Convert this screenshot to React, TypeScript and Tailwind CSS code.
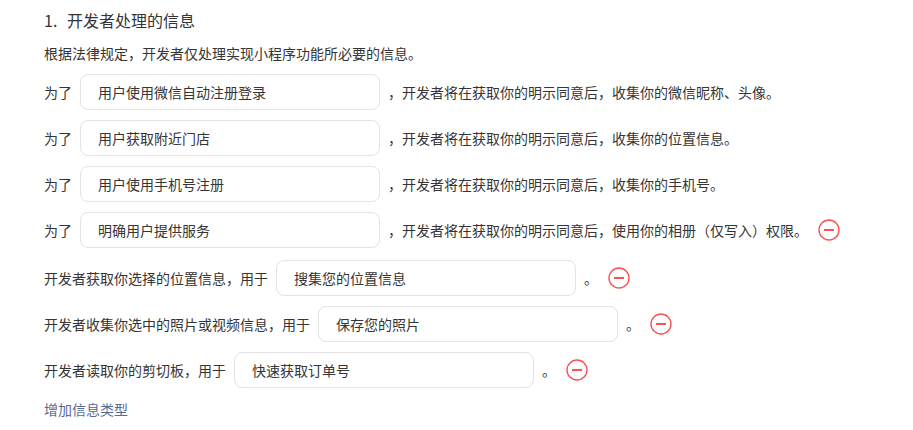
const purposeRows = [
  { value: "用户使用微信自动注册登录", tail: "，开发者将在获取你的明示同意后，收集你的微信昵称、头像。", removable: false },
  { value: "用户获取附近门店", tail: "，开发者将在获取你的明示同意后，收集你的位置信息。", removable: false },
  { value: "用户使用手机号注册", tail: "，开发者将在获取你的明示同意后，收集你的手机号。", removable: false },
  { value: "明确用户提供服务", tail: "，开发者将在获取你的明示同意后，使用你的相册（仅写入）权限。", removable: true },
];

const useRows = [
  { label: "开发者获取你选择的位置信息，用于", value: "搜集您的位置信息" },
  { label: "开发者收集你选中的照片或视频信息，用于", value: "保存您的照片" },
  { label: "开发者读取你的剪切板，用于", value: "快速获取订单号" },
];

function RemoveIcon() {
  return (
    <button className="ml-[10px] flex h-[22px] w-[22px] items-center justify-center">
      <svg width="22" height="22" viewBox="0 0 22 22">
        <circle cx="11" cy="11" r="10" fill="none" stroke="#fa5151" strokeWidth="1.4" />
        <line x1="6" y1="11" x2="16" y2="11" stroke="#fa5151" strokeWidth="2" />
      </svg>
    </button>
  );
}

function Field({ value }: { value: string }) {
  return (
    <div className="mx-2 flex h-[36px] w-[300px] shrink-0 items-center rounded-[8px] border border-[#e3e3e3] pl-[17px] text-[14px] text-[#353535]">
      {value}
    </div>
  );
}

export default function App() {
  return (
    <div
      className="min-h-screen bg-white pl-[44px] pt-[8px] text-[#353535]"
      style={{ fontFamily: '"Noto Sans CJK SC", "Noto Sans", sans-serif' }}
    >
      <div className="flex text-[16px] leading-[24px] text-[#353535]">
        <span className="w-[23px]">1.</span>
        <span>开发者处理的信息</span>
      </div>
      <div className="mt-[10px] text-[14px] leading-[22px]">根据法律规定，开发者仅处理实现小程序功能所必要的信息。</div>

      <div className="mt-[10px] flex flex-col gap-[10px] text-[14px]">
        {purposeRows.map((r) => (
          <div key={r.value} className="flex h-[36px] items-center whitespace-nowrap">
            <span>为了</span>
            <Field value={r.value} />
            <span>{r.tail}</span>
            {r.removable && <RemoveIcon />}
          </div>
        ))}
      </div>

      <div className="mt-[12px] flex flex-col gap-[10px] text-[14px]">
        {useRows.map((r) => (
          <div key={r.label} className="flex h-[36px] items-center whitespace-nowrap">
            <span>{r.label}</span>
            <Field value={r.value} />
            <span>。</span>
            <RemoveIcon />
          </div>
        ))}
      </div>

      <div className="mt-[10px] text-[14px] leading-[22px] text-[#576b95]">增加信息类型</div>
    </div>
  );
}
